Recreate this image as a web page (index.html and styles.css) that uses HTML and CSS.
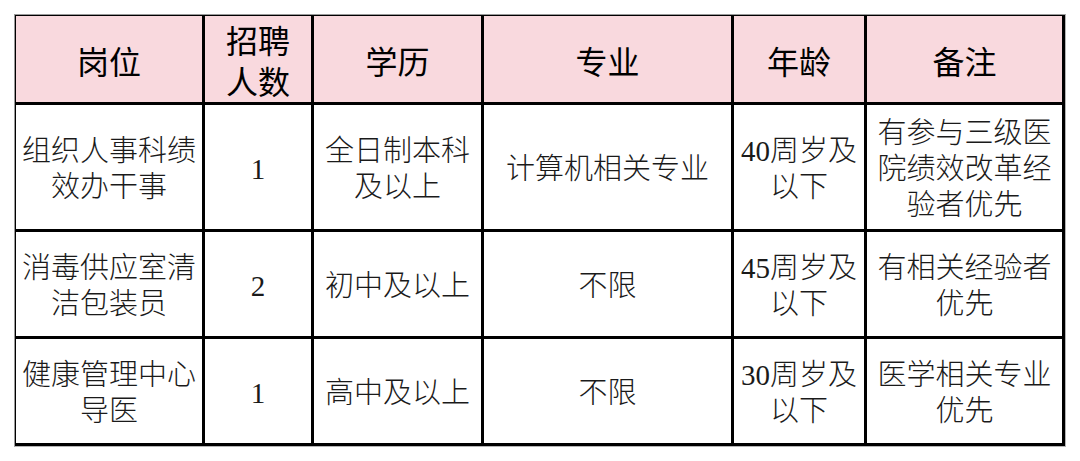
FILE: index.html
```html
<!DOCTYPE html>
<html lang="zh-CN">
<head>
<meta charset="utf-8">
<title>招聘岗位表</title>
<link rel="stylesheet" href="styles.css">
</head>
<body>
<div class="page">
  <div class="table">
    <div class="cell head">岗位</div>
    <div class="cell head narrow">招聘人数</div>
    <div class="cell head">学历</div>
    <div class="cell head">专业</div>
    <div class="cell head">年龄</div>
    <div class="cell head">备注</div>

    <div class="cell">组织人事科绩效办干事</div>
    <div class="cell">1</div>
    <div class="cell">全日制本科及以上</div>
    <div class="cell">计算机相关专业</div>
    <div class="cell">40周岁及以下</div>
    <div class="cell">有参与三级医院绩效改革经验者优先</div>

    <div class="cell">消毒供应室清洁包装员</div>
    <div class="cell">2</div>
    <div class="cell">初中及以上</div>
    <div class="cell">不限</div>
    <div class="cell">45周岁及以下</div>
    <div class="cell">有相关经验者优先</div>

    <div class="cell">健康管理中心导医</div>
    <div class="cell">1</div>
    <div class="cell">高中及以上</div>
    <div class="cell">不限</div>
    <div class="cell">30周岁及以下</div>
    <div class="cell">医学相关专业优先</div>
  </div>
</div>
</body>
</html>
```

FILE: styles.css
```css
html, body {
  margin: 0;
  padding: 0;
  background: #ffffff;
}

.page {
  padding: 14px 0 0 14px;
}

.table {
  display: inline-grid;
  grid-template-columns: 186px 106px 167px 247px 130px 195px;
  grid-template-rows: 86px 124px 104px 104px;
  gap: 3px;
  background: #000000;
  padding: 1px 3px 3px 1px;
  border-top: 1px solid #9a9a9a;
  border-left: 1px solid #9a9a9a;
  border-right: 1px solid #b5b5b5;
  border-bottom: 1px solid #b5b5b5;
  font-family: "Liberation Serif", "Noto Sans CJK SC", serif;
  color: #1a1a1a;
}

.cell {
  background: #ffffff;
  display: flex;
  align-items: center;
  justify-content: center;
  text-align: center;
  font-size: 29px;
  line-height: 36px;
  font-weight: 300;
  padding: 4px 6px 0 6px;
  box-sizing: border-box;
}

.head {
  background: #f9d9de;
  font-size: 32px;
  line-height: 41px;
  font-weight: 400;
  color: #000000;
  padding: 8px 4px 0 4px;
}

.narrow {
  padding-left: 16px;
  padding-right: 16px;
}
```
